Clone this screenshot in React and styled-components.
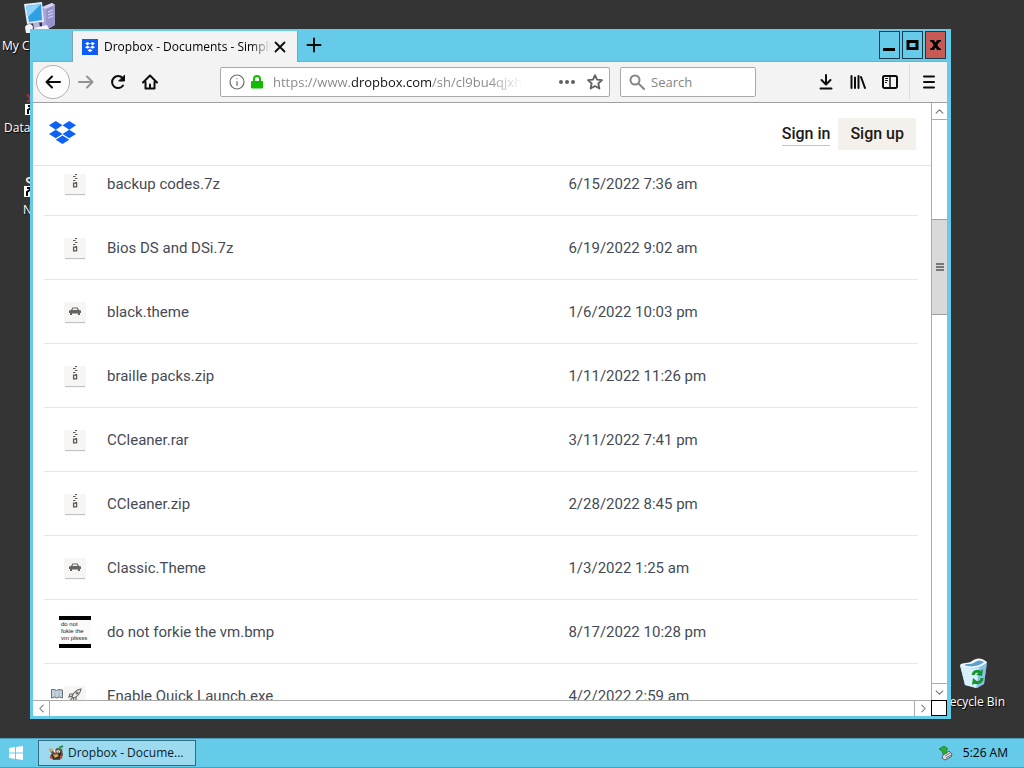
import styled, { createGlobalStyle, css } from 'styled-components'

const GlobalStyle = createGlobalStyle`
		* {
			box-sizing: border-box;
		}
		body {
			margin: 0;
			background: #343434;
		}
		button, input {
			font: inherit;
			margin: 0;
			padding: 0;
			border: 0;
			background: none;
			color: inherit;
			outline: 0;
		}
		svg {
			display: block;
			flex: none;
		}
	`,
	Desktop = styled.div`
		position: relative;
		display: flex;
		flex-direction: column;
		height: 100vh;
		overflow: hidden;
		background: #343434;
		font: 12px/16px 'Open Sans', sans-serif;
		color: #000;
	`,
	Wallpaper = styled.main`
		position: relative;
		flex: 1;
	`,
	Shortcut = styled.a`
		position: absolute;
		left: ${({ $left }) => $left};
		right: ${({ $right }) => $right};
		top: ${({ $top }) => $top};
		bottom: ${({ $bottom }) => $bottom};
		display: flex;
		flex-direction: column;
		align-items: center;
		gap: 4px;
		color: #fff;
		text-decoration: none;
		text-shadow: 1px 1px 1px #000;
		white-space: nowrap;
	`

/* browser window */
const Window = styled.section`
		position: absolute;
		top: 29px;
		right: 73px;
		bottom: 19px;
		left: 30px;
		display: flex;
		flex-direction: column;
		border: solid #66cae9;
		border-width: 2px 4px 3px 3px;
		background: #fff;
	`,
	TitleBar = styled.header`
		display: flex;
		height: 31px;
		padding-left: 39px;
		padding-right: 1px;
		background: #66cae9;
		border-bottom: 1px solid #84a9b8;
	`,
	Tab = styled.div`
		display: flex;
		align-items: center;
		width: 226px;
		height: 31px;
		padding: 0 8px 0 9px;
		background: #f3f3f3;
		border: solid #7fa5b3;
		border-width: 0 1px;
	`,
	TabTitle = styled.span`
		flex: 1;
		margin: 0 0 0 6px;
		overflow: hidden;
		white-space: nowrap;
		mask-image: linear-gradient(to left, transparent, #000 20px);
	`,
	IconButton = styled.button`
		display: flex;
		align-items: center;
		justify-content: center;
		flex: none;
		width: ${({ $width }) => $width || '32px'};
		height: ${({ $height }) => $height || '32px'};
	`,
	Controls = styled.div`
		display: flex;
		gap: 2px;
		margin-left: auto;
	`,
	ControlButton = styled(IconButton)`
		width: 21px;
		height: 28px;
		border: 1px solid #17394a;
		background: ${({ $danger }) => $danger ? '#c75b54' : 'transparent'};
	`,
	Toolbar = styled.nav`
		display: flex;
		align-items: center;
		height: 41px;
		padding: 0 2px 0 3px;
		background: #f3f3f3;
		border-bottom: 1px solid #a0a0a0;
		font-size: 13px;
	`,
	BackButton = styled(IconButton)`
		width: 34px;
		height: 34px;
		border: 1px solid #b0b0b0;
		border-radius: 50%;
		background: #fdfdfd;
	`,
	Spacer = styled.span`
		flex: 1;
	`,
	FieldGap = styled.span`
		width: 10px;
	`,
	Field = styled.div`
		display: flex;
		align-items: center;
		flex: 0 1 ${({ $width }) => $width};
		min-width: 0;
		height: 30px;
		padding: 0 0 0 8px;
		background: #fff;
		border: 1px solid #a9a9a9;
		border-radius: 2px;
	`,
	UrlIcons = styled.span`
		display: flex;
		gap: 5px;
	`,
	UrlInput = styled.input`
		flex: 1;
		min-width: 0;
		height: 24px;
		margin-left: 9px;
		color: transparent;
		background: linear-gradient(to right, #858585 78px, #111 78px, #111 158px, #858585 158px, #858585 215px, transparent 250px);
		background-clip: text;
	`,
	SearchInput = styled.input`
		flex: 1;
		min-width: 0;
		height: 24px;
		margin-left: 6px;
		&::placeholder {
			color: #858585;
			opacity: 1;
		}
	`,
	Divider = styled.span`
		width: 1px;
		height: 36px;
		margin: 0 3px;
		background: #dedede;
	`

/* page and scroll bars */
const Viewport = styled.div`
		display: grid;
		grid-template: minmax(0, 1fr) 16px / minmax(0, 1fr) 16px;
		flex: 1;
		min-height: 0;
	`,
	Page = styled.article`
		overflow: hidden;
		font: 15px/20px Roboto, sans-serif;
		color: #454b55;
	`,
	PageHeader = styled.header`
		position: relative;
		display: flex;
		align-items: center;
		gap: 8px;
		height: 63px;
		padding: 0 15px 0 16px;
		background: #fff;
		border-bottom: 1px solid #e4e4e4;
		font-size: 16px;
		font-weight: 500;
		line-height: 22px;
		color: #1e1919;
	`,
	HomeLink = styled.a`
		padding-bottom: 4px;
	`,
	SignIn = styled.a`
		margin-left: auto;
		border-bottom: 1px solid #c4c4c4;
		color: inherit;
		text-decoration: none;
	`,
	SignUp = styled.button`
		height: 32px;
		padding: 0 12px;
		background: #f4f0ec;
	`,
	FileTable = styled.table`
		width: calc(100% - 24px);
		margin: -14px 13px 0 11px;
		table-layout: fixed;
		border-spacing: 0;
	`,
	Row = styled.tr`
		height: 64px;
		> * {
			border-bottom: 1px solid #e6e6e6;
		}
	`,
	IconCell = styled.td`
		position: relative;
		width: 62px;
		padding: 0;
	`,
	NameCell = styled.th`
		padding: 0 1px;
		font-weight: inherit;
		text-align: left;
	`,
	DateCell = styled.td`
		width: 40%;
		padding: 0;
	`,
	FileTile = styled.div`
		display: flex;
		justify-content: center;
		width: 20px;
		height: 20px;
		margin: 0 auto;
		background: #f6f5f3;
		box-shadow: 0 1px 1px #c4c2be;
	`,
	Flag = styled.span`
		position: absolute;
		left: 7px;
		top: 24px;
	`,
	Thumbnail = styled.div`
		width: 32px;
		height: 32px;
		margin: 0 auto;
		padding: 1px 0 0 2px;
		border: solid #000;
		border-width: 4px 0;
		background: #fafafa;
		color: #222;
		font: 6px/7px 'Liberation Sans', sans-serif;
		white-space: nowrap;
	`,
	Track = styled.div`
		display: flex;
		background: #fff;
		border: 0 solid #ababab;
		${({ $vertical }) => $vertical ? css`
			flex-direction: column;
			border-left-width: 1px;
		` : css`
			border-top-width: 1px;
		`}
	`,
	ThumbArea = styled.div`
		flex: 1;
		padding-top: 99px;
	`,
	TrackButton = styled(IconButton)`
		width: ${({ $width }) => $width || '15px'};
		height: ${({ $height }) => $height || '15px'};
		border: 0 solid #ababab;
		border-width: ${({ $edge }) => $edge};
	`,
	Thumb = styled.div`
		display: flex;
		align-items: center;
		justify-content: center;
		height: 96px;
		background: #d9d9d9;
		border: solid #a0a0a0;
		border-width: 1px 0;
	`,
	Corner = styled.div`
		border: 1px solid #000;
		background: #fff;
	`

const Taskbar = styled.footer`
		display: flex;
		align-items: center;
		height: 30px;
		padding-right: 16px;
		background: #66cae9;
		border: solid #4d9fbc;
		border-width: 1px 0;
	`,
	TaskButton = styled.button`
		display: flex;
		align-items: center;
		gap: 4px;
		width: 158px;
		height: 26px;
		margin-left: 7px;
		padding: 0 9px;
		background: #9cdaf0;
		border: 1px solid #2d6c85;
		color: #0c1c28;
		white-space: nowrap;
	`,
	Tray = styled.div`
		display: flex;
		align-items: center;
		gap: 9px;
		margin-left: auto;
	`

const Stroke = ({ size = 16, color = '#0c0c0d', width = 2, d, children }) => (
	<svg width={size} height={size} viewBox='0 0 16 16' fill='none' stroke={color} strokeWidth={width} strokeLinecap='round' strokeLinejoin='round' aria-hidden='true'>
		<path d={d} />
		{children}
	</svg>
)

const DropboxLogo = ({ size, color }) => (
	<svg width={size} height={size} viewBox='0 0 24 24' fill={color} aria-hidden='true'>
		<path d='M6 1.8 0 5.6l6 3.9 6-3.9zM18 1.8l-6 3.8 6 3.9 6-3.9zM0 13.3l6 3.8 6-3.8-6-3.8zM18 9.5l-6 3.8 6 3.8 6-3.8zM6 18.4l6 3.8 6-3.8-6-3.8z' />
	</svg>
)

const Favicon = () => (
	<svg width='16' height='16' viewBox='0 0 16 16' aria-hidden='true'>
		<path fill='#0d5cf5' d='M0 0h16v16H0z' />
		<path fill='#fff' d='M5.5 3 8 4.600 5.500 6.200 3 4.600zM10.500 3 13 4.600 10.500 6.200 8 4.600zM5.500 6.600 8 8.200 5.500 9.800 3 8.200zM10.500 6.600 13 8.200 10.500 9.800 8 8.200zM8 9.800l2.500 1.600L8 13l-2.500-1.600z' />
	</svg>
)

const ComputerIcon = () => (
	<svg width='32' height='32' viewBox='0 0 32 32' aria-hidden='true'>
		<path fill='#a9a6dc' d='m18 5 10-4 3 2v20l-9 5-4-3z' />
		<path fill='#d5d3f3' d='m18 5 10-4 3 2-9 4z' />
		<path fill='#9794cc' d='m22 7 9-4v20l-9 5z' />
		<path stroke='#dbdaf8' d='m24 10 5-2m-5 5 5-2m-5 5 5-2' />
		<path fill='#e3e9f8' d='m0 2 18-2 2 20-17 2z' />
		<path fill='#2f9fe4' d='m2 4 15-2 1 16-13 2z' />
		<path fill='#8bd3fa' d='m2 4 15-2-13 13z' />
		<path fill='#b7b5df' d='m9 21 6-1 1 5-6 2z' />
		<path fill='#f3f3fb' d='M1 25c2-4 7-4 8 0l-1 6H2zM10 26l13-3 2 4-12 4z' />
	</svg>
)

const LinkIcon = ({ color, d }) => (
	<svg width='32' height='22' viewBox='0 0 32 22' aria-hidden='true'>
		<path stroke={color} strokeWidth='2' fill='none' d={d} />
		<path fill='#fff' d='M0 10h11v11H0z' />
		<path fill='none' stroke='#000' strokeWidth='2' d='M3 20v-4l4-3M3 12h5v5' />
	</svg>
)

const RecycleIcon = () => (
	<svg width='30' height='32' viewBox='0 0 30 32' aria-hidden='true'>
		<path fill='#a8d6f4' d='M1 7 28 4l-3 22-7 4-12-3z' />
		<path fill='#d9effc' d='M1 7c4 4 14 4 19 3l-3 20-11-3z' />
		<path fill='#75b0de' d='m20 10 8-6-3 22-7 4z' opacity='.6' />
		<path fill='#f2faff' d='M1 7c3-3 8-1 12-4s9-4 15 1c-4 5-19 9-27 3z' />
		<path fill='#5f9fcf' d='M5 7c4-2 7 0 11-3 3-2 6-2 9 0-4 4-13 6-20 3z' />
		<path fill='none' stroke='#14952b' strokeWidth='3' d='M14 17c1-4 5-5 8-2M23 20c0 4-4 6-8 4' />
		<path fill='#14952b' d='m24 11-1 7-6-1zM13 27l1-7 5 4z' />
	</svg>
)

const ZipGlyph = () => (
	<svg width='8' height='16' viewBox='0 0 8 16' fill='none' stroke='#5c5a56' aria-hidden='true'>
		<path strokeWidth='1' d='M4 .5h2M2 2.500h2.500M4 4.500h2.500M2 6.500h2.500M4 8.500h2' />
		<path strokeWidth='1.300' d='M2.600 9.200h3v3.600h-3z' />
	</svg>
)

const ThemeGlyph = () => (
	<svg width='12' height='20' viewBox='0 0 12 20' aria-hidden='true'>
		<path fill='#66635f' d='M2 8 3.500 5.500h5L10 8l2 .500v2.500h-1v2H9v-1.500H3V13H1v-2H0V8.500z' />
		<path fill='#f6f5f3' d='M4 6.500h4l.5 1.500h-5z' />
	</svg>
)

const RocketGlyph = () => (
	<svg width='14' height='20' viewBox='0 0 14 20' fill='none' stroke='#6b6864' strokeWidth='1.200' aria-hidden='true'>
		<path d='M4 11c1-4 4-7 9-8-1 5-4 8-8 9zM5 8H2l-1 3 3-1M8 11v3l-3 1 1-3M4 12l-3 4' />
		<circle cx='9' cy='7' r='1' />
	</svg>
)

const MapGlyph = () => (
	<svg width='12' height='12' viewBox='0 0 12 12' fill='#c7d2dd' stroke='#5e6c80' aria-hidden='true'>
		<path d='M.5 1.500h3l2 1 2-1 4 .500v8l-3-1-3 1-2-1-3 1z' />
		<path d='M4 2v7M8 2v7' opacity='.3' />
	</svg>
)

const GimpIcon = () => (
	<svg width='16' height='16' viewBox='0 0 16 16' aria-hidden='true'>
		<path fill='#66513a' d='m1 4 4 2 4-3 5 1 1 6-3 5H5L2 11l2-2z' />
		<path fill='#28231e' d='m3 9 5 2 5-4-1 6-6 1z' />
		<path fill='#d8a36a' d='m5 10 4-1 2 2-4 2zM1 3l4 1-1 3-3-1z' />
		<circle cx='7' cy='6' r='1.500' fill='#fff' />
		<circle cx='10.500' cy='6.500' r='1.500' fill='#eee' />
		<path stroke='#111' strokeWidth='1.200' d='M7 6h1M10 7h1' />
		<path stroke='#2b9148' strokeWidth='2' d='m11 3 4-2' />
		<path stroke='#d9412c' strokeWidth='2' d='m12 11 2 2M2 12l2 1' />
	</svg>
)

const TrayIcon = () => (
	<svg width='16' height='16' viewBox='0 0 16 16' aria-hidden='true'>
		<path fill='#dadfe0' stroke='#4e6368' d='m5 10 6-4 3 3-1 3-6 3-3-2z' />
		<path stroke='#62777b' d='m7 11 5-3m-4 5 5-3' />
		<path fill='#2eae2f' stroke='#19741f' strokeWidth='.700' d='m1 4 5-3 4 3-2 1 1 3-4 1-1-3z' />
	</svg>
)

const files = [
	{ name: 'backup codes.7z', date: '6/15/2022 7:36 am', kind: 'zip' },
	{ name: 'Bios DS and DSi.7z', date: '6/19/2022 9:02 am', kind: 'zip' },
	{ name: 'black.theme', date: '1/6/2022 10:03 pm', kind: 'theme' },
	{ name: 'braille packs.zip', date: '1/11/2022 11:26 pm', kind: 'zip' },
	{ name: 'CCleaner.rar', date: '3/11/2022 7:41 pm', kind: 'zip' },
	{ name: 'CCleaner.zip', date: '2/28/2022 8:45 pm', kind: 'zip' },
	{ name: 'Classic.Theme', date: '1/3/2022 1:25 am', kind: 'theme' },
	{ name: 'do not forkie the vm.bmp', date: '8/17/2022 10:28 pm', kind: 'image' },
	{ name: 'Enable Quick Launch.exe', date: '4/2/2022 2:59 am', kind: 'exe' }
]

const FileIcon = ({ kind }) => {
	switch (kind) {
		case 'image':
			return <Thumbnail>do not<br />fokie the<br />vm plssss</Thumbnail>

		case 'theme':
			return <FileTile><ThemeGlyph /></FileTile>

		case 'exe':
			return <>
						<Flag><MapGlyph /></Flag>
						<FileTile><RocketGlyph /></FileTile>
					</>

		default:
			return <FileTile><ZipGlyph /></FileTile>
	}
}

const BrowserToolbar = () => (
	<Toolbar>
		<BackButton aria-label='Back'><Stroke d='M15 8H1.500M7 2.500 1.500 8 7 13.500' /></BackButton>
		<IconButton aria-label='Forward'><Stroke color='#929292' d='M1 8h13.500M9 2.500 14.500 8 9 13.500' /></IconButton>
		<IconButton aria-label='Reload'>
			<Stroke d='M13 11.500a6 6 0 1 1-.500-7.500'>
				<path fill='#0c0c0d' strokeWidth='1' d='M14.500 1.500v5.500H9z' />
			</Stroke>
		</IconButton>
		<IconButton aria-label='Home'>
			<Stroke d='M1 8.500 8 1.500l7 7M3.500 8v6.500h9V8'>
				<path d='M8 10.500v3' />
			</Stroke>
		</IconButton>
		<Spacer />
		<Field $width='390px'>
			<UrlIcons>
				<Stroke color='#6a6a6a' width='1.200' d='M8 7.500v4M8 4.500v.200'><circle cx='8' cy='8' r='7' /></Stroke>
				<svg width='14' height='16' viewBox='0 0 14 16' aria-hidden='true'>
					<path fill='#12bc00' d='M1.500 7.500h11V14h-11z' stroke='#12bc00' strokeLinejoin='round' />
					<path fill='none' stroke='#12bc00' strokeWidth='2' d='M4 7V5a3 3 0 0 1 6 0v2' />
				</svg>
			</UrlIcons>
			<UrlInput aria-label='Address' defaultValue='https://www.dropbox.com/sh/cl9bu4qjxh' />
			<IconButton $width='28px' $height='28px' aria-label='Page actions'>
				<svg width='18' height='6' viewBox='0 0 18 6' fill='#606060'><circle cx='3' cy='3' r='2' /><circle cx='9' cy='3' r='2' /><circle cx='15' cy='3' r='2' /></svg>
			</IconButton>
			<IconButton $width='28px' $height='28px' aria-label='Bookmark'>
				<Stroke color='#606060' width='1.800' d='m8 1.200 2 4.500 5 .500-3.700 3.300 1.100 5L8 12l-4.400 2.500 1.100-5L1 6.200l5-.500z' />
			</IconButton>
		</Field>
		<FieldGap />
		<Field $width='136px'>
			<Stroke color='#858585' d='m10 10 5 5'><circle cx='6' cy='6' r='4.500' /></Stroke>
			<SearchInput aria-label='Search' placeholder='Search' />
		</Field>
		<Spacer />
		<IconButton aria-label='Downloads'><Stroke d='M8 1v9M3.500 6 8 10.500 12.500 6M2.500 14.500h11' /></IconButton>
		<IconButton aria-label='Library'>
			<svg width='16' height='16' viewBox='0 0 16 16' fill='none' stroke='#0c0c0d' strokeWidth='2' strokeLinecap='round'>
				<path d='M1.500 2v12M5 3.500V14M8.500 2v12M11 3l4 11' />
			</svg>
		</IconButton>
		<IconButton aria-label='Sidebars'>
			<Stroke d='M2.500 2h11a1.500 1.500 0 0 1 1.500 1.500v9a1.500 1.500 0 0 1-1.500 1.500h-11A1.500 1.500 0 0 1 1 12.500v-9A1.500 1.500 0 0 1 2.500 2z'>
				<path strokeWidth='1.500' d='M8 2.500v11' />
				<path strokeWidth='1' d='M3.500 4.500h2M3.500 6.500h2M3.500 8.500h1' />
			</Stroke>
		</IconButton>
		<Divider />
		<IconButton aria-label='Menu'><Stroke d='M3 2.500h10M3 8h10M3 13.500h10' /></IconButton>
	</Toolbar>
)

const SharedFolder = () => (
	<Page>
		<PageHeader>
			<HomeLink href='#home' aria-label='Dropbox'><DropboxLogo size={27} color='#0d61f6' /></HomeLink>
			<SignIn href='#login'>Sign in</SignIn>
			<SignUp>Sign up</SignUp>
		</PageHeader>
		<FileTable>
			<tbody>
				{files.map(({ name, date, kind }) => (
					<Row key={name}>
						<IconCell><FileIcon kind={kind} /></IconCell>
						<NameCell scope='row'>{name}</NameCell>
						<DateCell>{date}</DateCell>
					</Row>
				))}
			</tbody>
		</FileTable>
	</Page>
)

const Arrow = ({ d }) => <Stroke size={9} width='1.800' color='#707070' d={d} />

const App = () => (
	<Desktop>
		<GlobalStyle />
		<Wallpaper>
			<Shortcut href='#computer' $left='2px' $top='2px'><ComputerIcon />My Computer</Shortcut>
			<Shortcut href='#data' $left='4px' $top='94px'><LinkIcon color='#b52c37' d='m2 0 5 7M2 8l5-4' />DataVisualize</Shortcut>
			<Shortcut href='#notes' $left='23px' $top='176px'><LinkIcon color='#e0e0d4' d='M8 2C1 1 1 6 8 7' />Notes</Shortcut>
			<Shortcut href='#recycle' $right='19px' $bottom='28px'><RecycleIcon />Recycle Bin</Shortcut>
			<Window>
				<TitleBar>
					<Tab>
						<Favicon />
						<TabTitle>Dropbox - Documents - Simplify your life</TabTitle>
						<IconButton $width='18px' $height='18px' aria-label='Close tab'><Stroke size={12} width='2.400' d='m2 2 12 12M14 2 2 14' /></IconButton>
					</Tab>
					<IconButton $height='28px' aria-label='New tab'><Stroke d='M8 1.500v13M1.500 8h13' /></IconButton>
					<Controls>
						<ControlButton aria-label='Minimize'>
							<svg width='13' height='12' viewBox='0 0 13 12'><path fill='#000' d='M0 9h12v3H0z' /></svg>
						</ControlButton>
						<ControlButton aria-label='Maximize'>
							<svg width='13' height='10' viewBox='0 0 13 10'><path fill='none' stroke='#000' strokeWidth='3' d='M2 1.500h9v7H2z' /></svg>
						</ControlButton>
						<ControlButton $danger aria-label='Close'>
							<svg width='11' height='10' viewBox='0 0 11 10'><path stroke='#000' strokeWidth='3' d='m2 0 7 10M9 0 2 10' /><path stroke='#000' strokeWidth='1.500' d='M0 .800h4M7 .800h4M0 9.200h4M7 9.200h4' /></svg>
						</ControlButton>
					</Controls>
				</TitleBar>
				<BrowserToolbar />
				<Viewport>
					<SharedFolder />
					<Track $vertical>
						<TrackButton $height='17px' $edge='0 0 1px' aria-label='Scroll up'><Arrow d='m2 11 6-6 6 6' /></TrackButton>
						<ThumbArea>
							<Thumb>
								<svg width='8' height='8' viewBox='0 0 8 8'><path stroke='#555' strokeWidth='1.500' d='M0 1h8M0 4h8M0 7h8' /></svg>
							</Thumb>
						</ThumbArea>
						<TrackButton $height='17px' $edge='1px 0 0' aria-label='Scroll down'><Arrow d='m2 5 6 6 6-6' /></TrackButton>
					</Track>
					<Track>
						<TrackButton $width='17px' $edge='0 1px 0 0' aria-label='Scroll left'><Arrow d='M11 2 5 8l6 6' /></TrackButton>
						<Spacer />
						<TrackButton $width='17px' $edge='0 0 0 1px' aria-label='Scroll right'><Arrow d='m5 2 6 6-6 6' /></TrackButton>
					</Track>
					<Corner />
				</Viewport>
			</Window>
		</Wallpaper>
		<Taskbar>
			<IconButton $width='31px' $height='28px' aria-label='Start'>
				<svg width='14' height='14' viewBox='0 0 14 14' fill='#fff'><path d='m0 2 6-1v5.500H0zM7 1l7-1v6.500H7zM0 7.500h6V13l-6-1zM7 7.500h7V14l-7-1z' /></svg>
			</IconButton>
			<TaskButton><GimpIcon />Dropbox - Docume...</TaskButton>
			<Tray>
				<TrayIcon />
				<time>5:26 AM</time>
			</Tray>
		</Taskbar>
	</Desktop>
)

export default App
